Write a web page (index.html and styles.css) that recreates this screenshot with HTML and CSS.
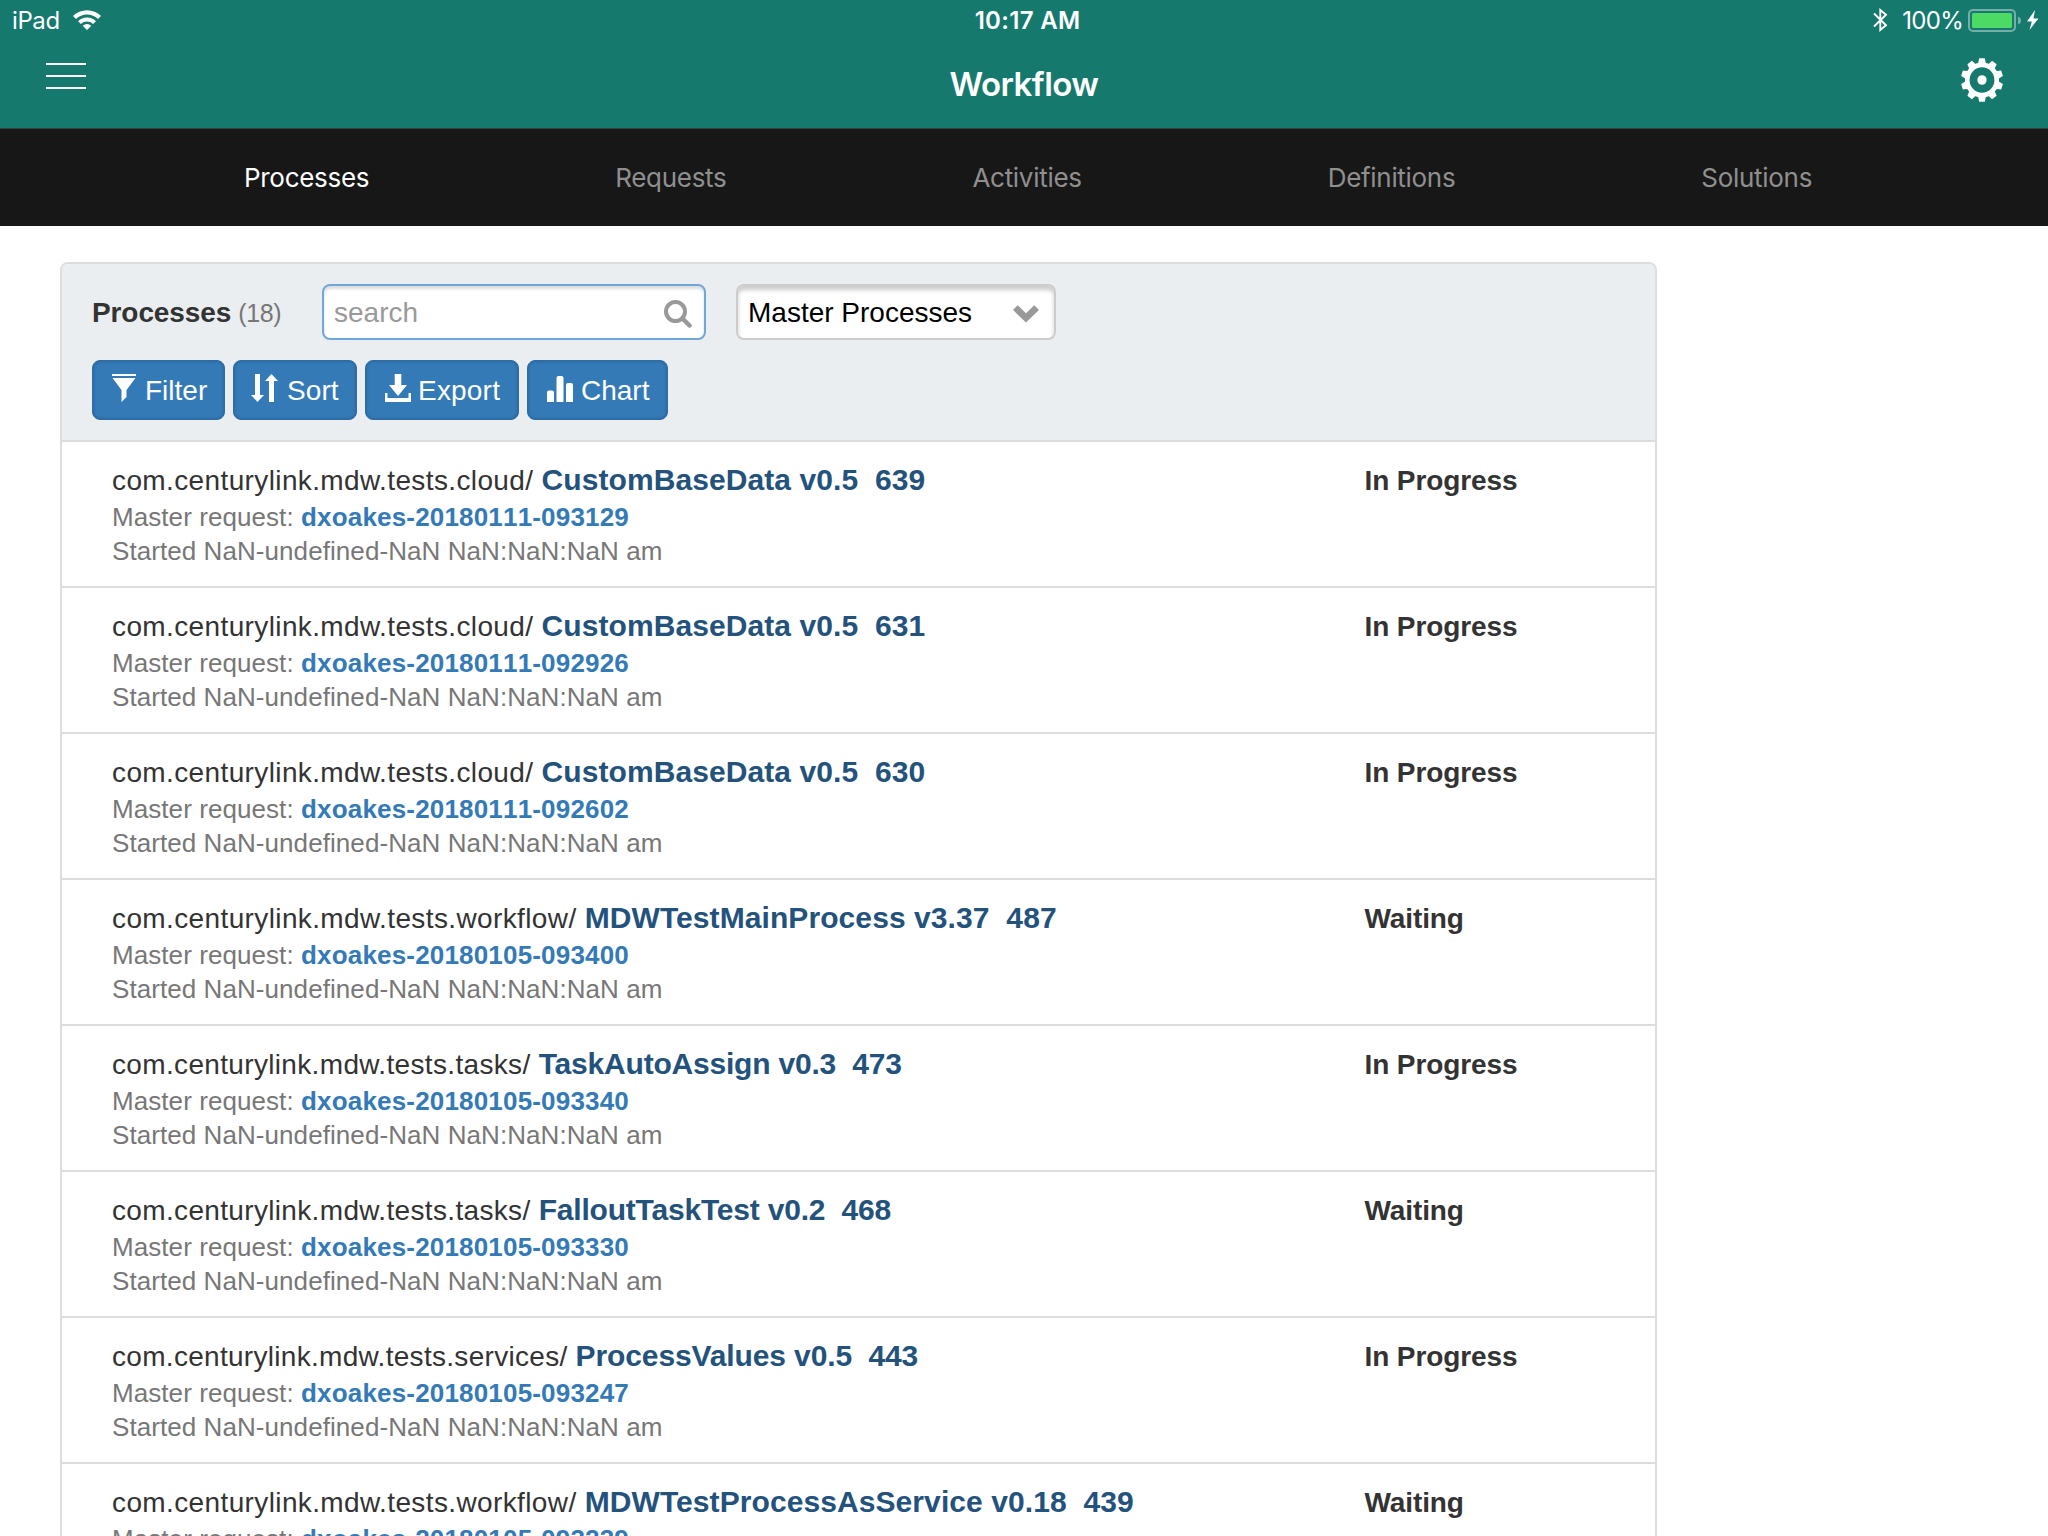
FILE: index.html
```html
<!DOCTYPE html>
<html lang="en">
<head>
<meta charset="utf-8">
<title>Workflow</title>
<link rel="stylesheet" href="styles.css">
</head>
<body>
<header class="topbar">
  <div class="status">
    <div class="status-left">
      <span class="device">iPad</span>
      <svg class="wifi" width="28" height="20" viewBox="0 0 28 20"><path d="M14 20l-4.300-4.300a6.200 6.200 0 0 1 8.600 0zM5 11.200a12.800 12.800 0 0 1 18 0l-2.900 2.900a8.700 8.700 0 0 0-12.200 0zM0 6.100a19.800 19.800 0 0 1 28 0l-3 3a15.600 15.600 0 0 0-22 0z" fill="#fff"/></svg>
    </div>
    <span class="time">10:17 AM</span>
    <div class="status-right">
      <svg class="bt" width="15" height="24" viewBox="0 0 15 24"><path d="M1 5.500L13 17.300 7.300 22V2L13 6.700 1 18.500" fill="none" stroke="#fff" stroke-width="1.900"/></svg>
      <span class="pct">100%</span>
      <svg class="battery" width="72" height="24" viewBox="0 0 72 24"><rect x="1" y="1" width="46" height="21" rx="4" fill="none" stroke="#73afa7" stroke-width="2"/><rect x="4" y="4" width="40" height="15" rx="1.500" fill="#4cd964"/><path d="M50 7.500q3 1 3 4t-3 4z" fill="#73afa7"/><path d="M67 1L59 12.500h4.800L61.500 21 70.500 9.500h-5z" fill="#fff"/></svg>
    </div>
  </div>
  <div class="titlebar">
    <svg class="menu" width="40" height="26" viewBox="0 0 40 26"><path d="M0 1h40M0 13h40M0 25h40" stroke="#fff" stroke-width="2"/></svg>
    <h1 class="title">Workflow</h1>
    <svg class="gear" width="44" height="44" viewBox="-22 -22 44 44"><g transform="scale(.97 1)"><g fill="#fff"><g id="teeth"><path id="tooth" d="M-4.200-15.500L-2.900-21.700H2.900L4.200-15.500z"/><use href="#tooth" transform="rotate(36)"/><use href="#tooth" transform="rotate(72)"/><use href="#tooth" transform="rotate(108)"/><use href="#tooth" transform="rotate(144)"/></g><use href="#teeth" transform="rotate(180)"/><circle r="4.800"/></g><circle r="15.200" fill="none" stroke="#fff" stroke-width="4.800"/></g></svg>
  </div>
</header>
<nav class="tabs">
  <span class="active">Processes</span><span>Requests</span><span>Activities</span><span>Definitions</span><span>Solutions</span>
</nav>
<main class="panel">
  <div class="panel-head">
    <div class="controls">
      <div class="heading"><b>Processes</b><span class="count">(18)</span></div>
      <div class="search"><span>search</span>
        <svg width="28" height="28" viewBox="0 0 28 28"><circle cx="11.500" cy="11.500" r="9.500" fill="none" stroke="#999" stroke-width="4"/><path d="M18.500 18.500l7 7" stroke="#999" stroke-width="4.500" stroke-linecap="round"/></svg>
      </div>
      <div class="select"><span>Master Processes</span>
        <svg width="26" height="18" viewBox="0 0 26 18"><path d="M0 5L4.700.3 13 8.300 21.300.3 26 5 13 17.500z" fill="#999"/></svg>
      </div>
    </div>
    <div class="buttons">
      <div class="btn filter"><svg width="24" height="28" viewBox="0 0 24 28"><path d="M0 0h24v2H0zM.5 4h23L14.500 16v7L9.500 28V16z" fill="#fff"/></svg><span>Filter</span></div>
      <div class="btn sort"><svg width="27" height="28" viewBox="0 0 27 28"><path d="M4 0h5v21h4L6.500 28 0 21h4zM18 28V7h-4L20.500 0 27 7h-4v21z" fill="#fff"/></svg><span>Sort</span></div>
      <div class="btn export"><svg width="26" height="28" viewBox="0 0 26 28"><path d="M9.700 0h6.600v11H22L13 22 4 11h5.700zM0 19h2.500v5h21v-5H26v9H0z" fill="#fff"/></svg><span>Export</span></div>
      <div class="btn chart"><svg width="26" height="26" viewBox="0 0 26 26"><path d="M0 26V16.500q0-2 2-2h3q2 0 2 2V26zM9.500 26V2q0-2 2-2h3q2 0 2 2v24zM19 26V9q0-2 2-2h3q2 0 2 2v17z" fill="#fff"/></svg><span>Chart</span></div>
    </div>
  </div>
  <ul class="list" id="list"></ul>
</main>
<script src="list.js"></script>
</body>
</html>
```
FILE: styles.css
```css
* { box-sizing: border-box; }
body { margin: 0; height: 1536px; overflow: hidden; background: #fff; font-family: "Liberation Sans", Arial, sans-serif; color: #333; }
svg { display: block; flex: none; }
span, b { white-space: pre; }

.topbar { height: 128px; background: #15796d; color: #fff; font-family: Inter, sans-serif; }
.status { height: 42px; display: grid; grid-template-columns: 1fr auto 1fr; font-size: 24px; line-height: 42px; }
.status-left { display: flex; padding-left: 12px; }
.device { letter-spacing: -.4px; }
.wifi { margin: 10px 0 0 13px; }
.time { font-weight: 600; letter-spacing: .3px; padding-left: 7px; }
.status-right { display: flex; justify-content: flex-end; padding-right: 8px; }
.bt { margin-top: 8px; }
.pct { margin-left: 14px; letter-spacing: -.7px; }
.battery { margin: 9px 0 0 5px; }
.titlebar { height: 86px; display: grid; grid-template-columns: 1fr auto 1fr; }
.menu { margin: 21px 0 0 46px; }
.title { margin: 0; font-size: 33px; font-weight: 600; line-height: 84px; letter-spacing: -.55px; }
.gear { margin: 16px 44px 0 0; justify-self: end; }

.tabs { height: 98px; background: #171717; border-top: 1px solid #33413f; display: flex; gap: 246px; padding-left: 244px; font-family: Inter, sans-serif; font-size: 26px; line-height: 98px; letter-spacing: -.3px; color: #8f8f8f; }
.active { color: #fff; }

.panel { margin: 36px 0 0 60px; width: 1597px; border: 2px solid #dcdddf; border-radius: 8px 8px 0 0; overflow: hidden; }
.panel-head { height: 176px; padding: 20px 30px 0; background: #ebeef1; }
.controls { display: flex; height: 56px; }
.heading { width: 230px; display: flex; font-size: 28px; line-height: 58px; letter-spacing: -.1px; }
.count { margin-left: 7px; font-size: 25px; letter-spacing: -.4px; color: #777; }
.search, .select { height: 56px; display: flex; border: 2px solid #ccc; border-radius: 8px; background: #fff; font-size: 28px; line-height: 54px; padding-left: 10px; justify-content: space-between; }
.search { width: 384px; border-color: #6fa8d8; color: #999; box-shadow: inset 0 3px 3px #ddd; padding-right: 12px; }
.search svg { margin-top: 14px; }
.select { width: 320px; margin-left: 30px; color: #000; box-shadow: inset 0 4px 4px #ccc; padding-right: 15px; }
.select svg { margin-top: 19px; }
.buttons { display: flex; gap: 8px; margin-top: 20px; }
.btn { height: 60px; display: flex; border: 1px solid #2e6da4; border-radius: 8px; background: #337ab7; box-shadow: inset 0 0 3px #28588a; color: #fff; font-size: 28px; line-height: 59px; padding-left: 19px; }
.btn svg { margin: 13px 9px 0 0; }
.filter { width: 133px; }
.sort { width: 124px; padding-left: 17px; letter-spacing: .1px; }
.export { width: 154px; letter-spacing: .2px; }
.export svg { margin-right: 7px; }
.chart { width: 141px; }
.chart svg { margin: 15px 8px 0 0; }

.list { list-style: none; margin: 0; padding: 0; }
.row { height: 146px; border-top: 2px solid #ddd; display: flex; padding: 19px 0 0 50px; }
.info { width: 1252.5px; }
.line1 { height: 39px; line-height: 38px; font-size: 28px; letter-spacing: .38px; }
.name { font-size: 30px; font-weight: bold; color: #23527c; letter-spacing: .08px; }
.tasks .line1 { letter-spacing: .34px; }
.tasks .name { letter-spacing: -.2px; }
.services .line1 { letter-spacing: .3px; }
.services .name { letter-spacing: -.12px; }
.line2, .line3 { height: 34px; line-height: 34px; font-size: 26px; letter-spacing: .07px; color: #777; }
.line2 b { color: #337ab7; font-kerning: none; letter-spacing: .18px; }
.state { font-size: 28px; font-weight: bold; line-height: 39px; letter-spacing: -.1px; }
```
FILE: list.js
```js
const rows = [
  ["cloud", "CustomBaseData v0.5", "639", "20180111-093129", "In Progress"],
  ["cloud", "CustomBaseData v0.5", "631", "20180111-092926", "In Progress"],
  ["cloud", "CustomBaseData v0.5", "630", "20180111-092602", "In Progress"],
  ["workflow", "MDWTestMainProcess v3.37", "487", "20180105-093400", "Waiting"],
  ["tasks", "TaskAutoAssign v0.3", "473", "20180105-093340", "In Progress"],
  ["tasks", "FalloutTaskTest v0.2", "468", "20180105-093330", "Waiting"],
  ["services", "ProcessValues v0.5", "443", "20180105-093247", "In Progress"],
  ["workflow", "MDWTestProcessAsService v0.18", "439", "20180105-093239", "Waiting"]
];
document.getElementById("list").innerHTML = rows.map(r => `<li class="row ${r[0]}"><div class="info">
<div class="line1"><span>com.centurylink.mdw.tests.${r[0]}/ </span><span class="name">${r[1]}&nbsp; ${r[2]}</span></div>
<div class="line2"><span>Master request: </span><b>dxoakes-${r[3]}</b></div>
<div class="line3"><span>Started NaN-undefined-NaN NaN:NaN:NaN am</span></div>
</div><div class="state">${r[4]}</div></li>`).join("");
```
